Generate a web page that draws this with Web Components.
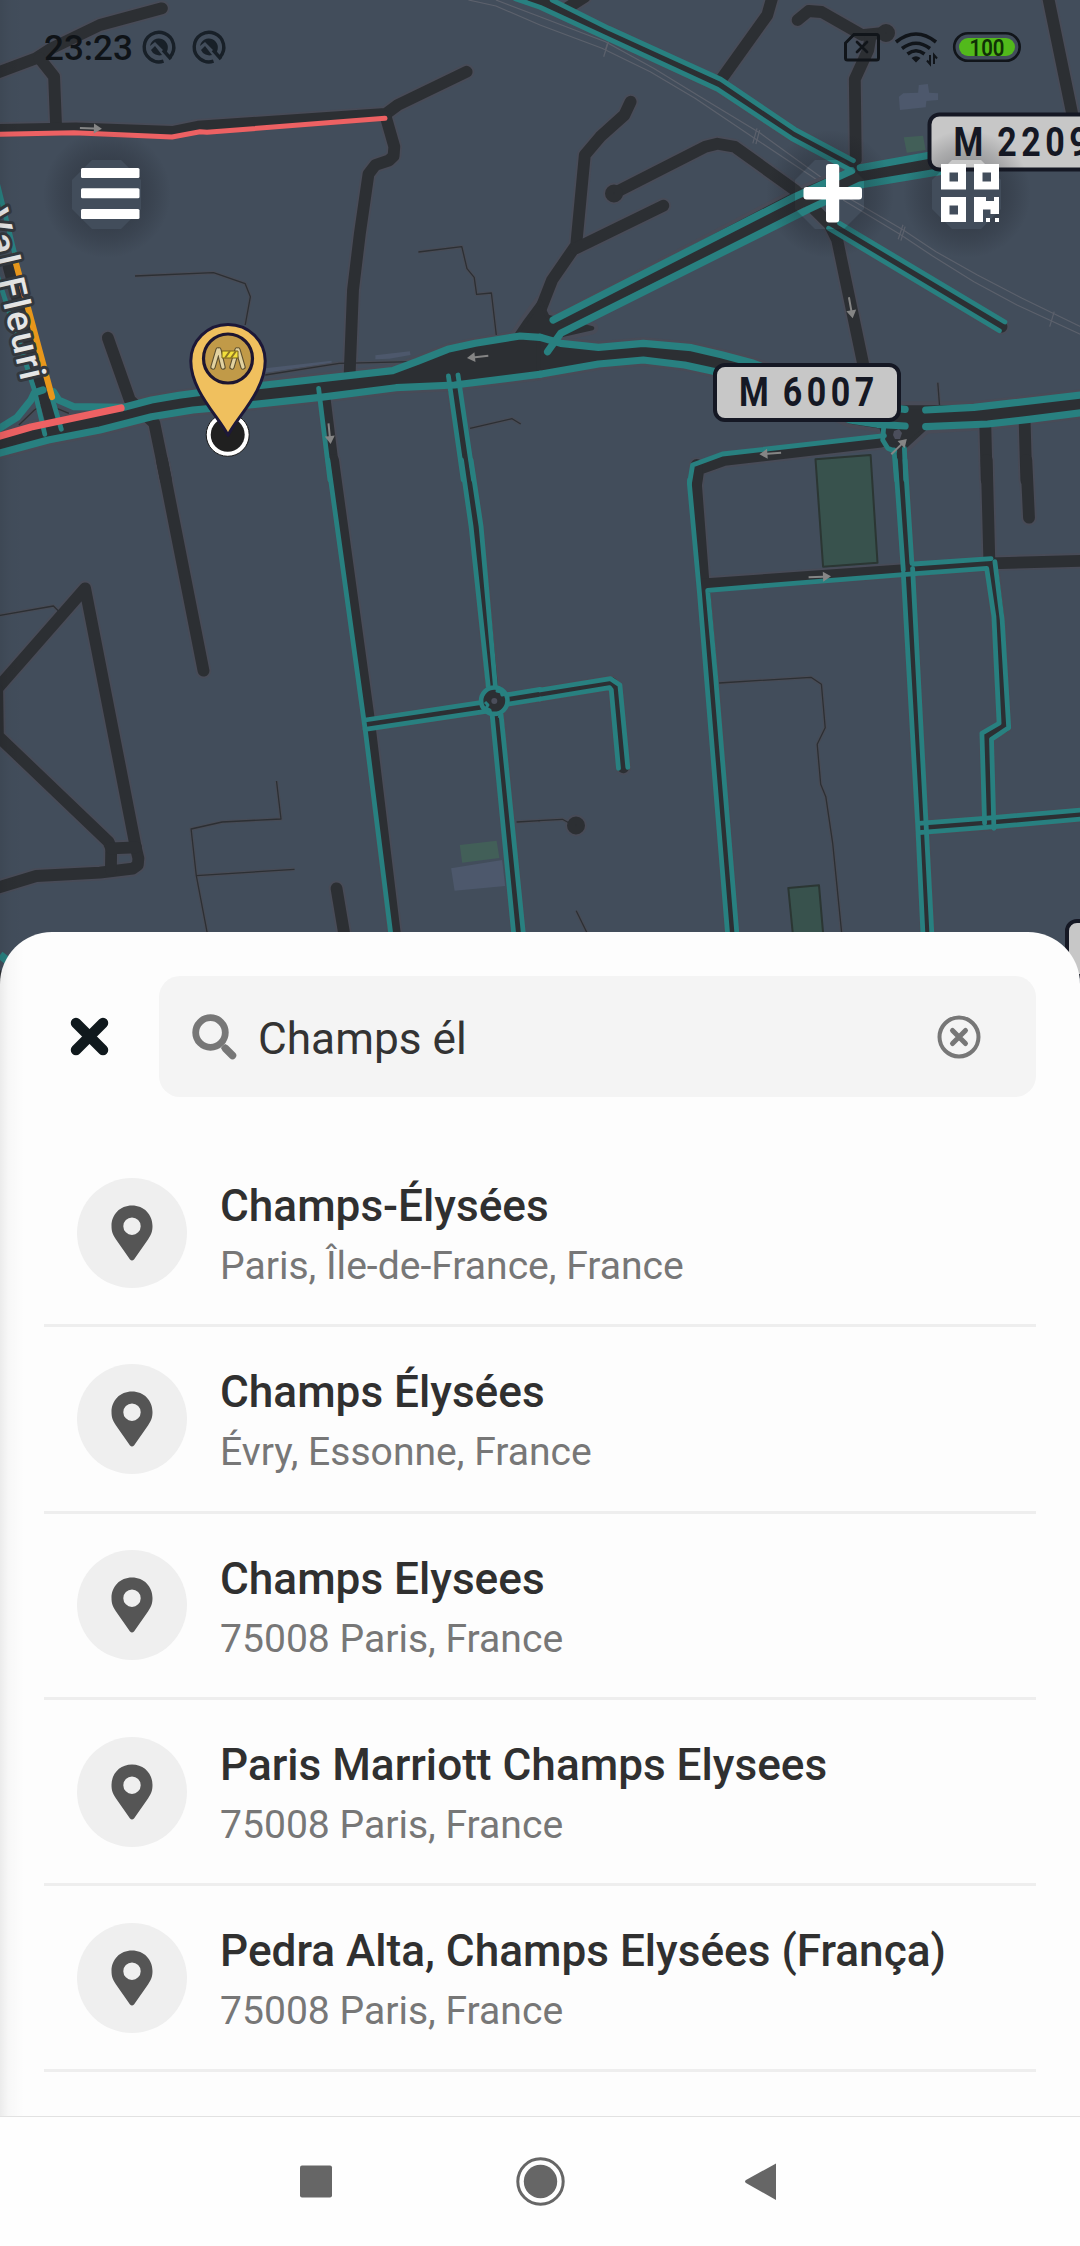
<!DOCTYPE html>
<html lang="fr">
<head>
<meta charset="utf-8">
<title>Recherche</title>
<style>
html,body{margin:0;padding:0}
body{font-family:Roboto,"Liberation Sans",sans-serif;background:#fdfdfd}
</style>
</head>
<body>
<nav-screen>
  <city-map slot="map"></city-map>
  <phone-status slot="status"></phone-status>
  <map-toolbar slot="tools"></map-toolbar>
  <search-sheet slot="sheet" query="Champs él">
    <place-row><span slot="name">Champs-Élysées</span><span slot="area">Paris, Île-de-France, France</span></place-row>
    <place-row><span slot="name">Champs Élysées</span><span slot="area">Évry, Essonne, France</span></place-row>
    <place-row><span slot="name">Champs Elysees</span><span slot="area">75008 Paris, France</span></place-row>
    <place-row><span slot="name">Paris Marriott Champs Elysees</span><span slot="area">75008 Paris, France</span></place-row>
    <place-row><span slot="name">Pedra Alta, Champs Elysées (França)</span><span slot="area">75008 Paris, France</span></place-row>
  </search-sheet>
  <system-nav slot="nav"></system-nav>
</nav-screen>
<script>
function define(name, render) {
  customElements.define(name, class extends HTMLElement {
    constructor() {
      super();
      this.attachShadow({ mode: 'open' });
    }
    connectedCallback() { this.shadowRoot.innerHTML = render(this); }
  });
}

const TILES = { A: [0, 0], B: [540, 0], C: [0, 460], D: [540, 460] };
function project(tile, pts) {
  const n = pts.trim().split(/[ ,]+/).map(Number), o = TILES[tile], out = [];
  for (let i = 0; i < n.length; i += 2)
    out.push((o[0] + n[i] / 2.9037).toFixed(1) + ',' + (o[1] + n[i + 1] / 3).toFixed(1));
  return out.join(' ');
}
const streets = [
  ['A','-10 219,105 175,150 145,290 75,470 25'],['A','115 175,157 230,163 380'],
  ['A','-10 390,220 385,500 396,575 380,1120 342,1155 315,1355 215'],
  ['A','1120 350,1145 440,1143 468,1130 481,1090 495,1070 522,1045 700,1025 870,1015 1125'],
  ['A','313 1013,377 1200,448 1270,482 1440'],['C','470 0,591 632'],
  ['A','943 1200,972 1440'],['C','967 0,1070 770,1147 1425'],
  ['A','1318 1160,1360 1440'],['C','1354 0,1383 200,1430 690'],
  ['A','25 800,155 1290'],
  ['B','-20 -5,520 255,735 402,905 495'],
  ['B','850 675,1340 980'],
  ['B','215 580,480 440,515 431,565 440,740 570,840 672,863 720,938 1090'],
  ['B','263 305,245 345,175 410,130 465,105 735,35 840,5 920,-30 990'],['B','105 745,358 617'],
  ['B','70 30,130 -10'],['B','675 -10,660 45,525 240'],
  ['B','748 60,780 33,818 36,935 105,1005 98'],['B','960 108,953 150,914 238,917 480'],
  ['B','1475 -10,1547 350'],
  ['B','990 1325,535 1380,460 1408,453 1455'],['D','455 15,453 75,477 400,498 650,558 1425'],
  ['B','1043 1340,1049 1440'],['D','1047 0,1068 320,1126 1425'],
  ['B','1293 1275,1297 1440'],['D','1297 0,1305 310'],['B','1407 1260,1412 1440'],['D','1412 0,1420 173'],
  ['D','475 373,1070 330,1310 310,1580 302'],
  ['D','1310 310,1330 470,1347 800,1297 828,1304 1090'],
  ['D','1110 1104,1310 1088,1580 1063'],
  ['C','1070 793,1400 742'],['C','1450 722,1568 704'],['D','0 704,207 669,219 681,242 922'],
  ['C','1441 740,1506 1425'],
  ['C','-12 690,247 385,395 1165,402 1195,400 1215,385 1226,290 1238,105 1248,-10 1284'],
  ['C','-8 690,-6 828,315 1145,323 1165,322 1230'],['C','323 1165,395 1162'],
  ['C','977 1285,1000 1425']
];
const wide = [['B','1160 490,900 533,750 600,48 980']];
const blocks = [
  ['A','0 1308,90 1280,350 1224,440 1200,620 1172,770 1155,1140 1112,1210 1085,1300 1048,1380 1030,1510 1008,1568 1008,1568 1123,1320 1155,1150 1163,930 1192,740 1213,560 1230,440 1250,290 1290,140 1320,0 1360'],
  ['A','1568 905,1525 965,1500 1003,1568 1020,1720 985,1590 950'],
  ['B','-4 1010,60 1030,170 1042,300 1030,440 1043,530 1065,620 1090,800 1160,950 1215,1060 1222,1115 1222,1260 1222,1380 1208,1580 1184,1580 1237,1420 1258,1300 1272,1120 1283,1060 1340,1010 1335,990 1280,900 1265,750 1200,530 1120,420 1095,300 1080,170 1092,-4 1123']
];
const paths = [
  ['A','392 828,620 818,712 851,727 890,712 975'],['A','1215 756,1341 740,1356 806,1377 832,1384 883,1427 879,1441 1005'],
  ['A','770 1125,985 1090,1200 1085'],['A','1365 1285,1487 1256,1512 1272'],
  ['A','55 1275,100 1230,130 1210,200 1240'],['B','1155 1148,1160 1215'],
  ['D','520 669,787 652,817 673,828 803,805 853,815 973,830 1010,850 1150,876 1420'],
  ['D','-5 1082,65 1078,90 1092'],['C','1500 1086,1568 1082'],['D','105 1352,137 1420'],
  ['C','0 466,155 438,170 453'],['C','803 963,816 1077,645 1086,555 1107,570 1247,602 1420'],['C','570 1247,855 1228']
];
const rails = [
  ['A','1360 0,1440 18,1568 75'],['A','1440 0,1568 50'],
  ['B','0 50,190 125,330 205,465 290,640 400,820 535'],['B','0 75,180 145,320 215,450 295,630 420,805 540'],
  ['B','890 590,1055 690,1150 755,1270 825,1400 895,1580 985'],['B','880 600,1045 703,1140 768,1260 845,1385 915,1580 1008'],
  ['B','185 170,200 120'],['B','190 150,196 130'],['B','618 430,630 385'],['B','627 432,638 390'],
  ['B','1040 718,1054 674'],['B','1048 722,1060 680'],['B','1480 980,1493 935']
];
const flow = [
  ['A','925 1165,958 1440'],['C','952 0,1062 820,1135 1425'],
  ['A','1302 1128,1345 1440'],['A','1330 1125,1375 1440'],
  ['C','1340 0,1368 200,1418 680'],['C','1368 0,1397 200,1440 695'],
  ['B','35 0,200 85,525 238,740 388,910 482'],['B','-72 -4,0 22,515 268,730 415,905 512'],
  ['B','870 670,1350 966'],['B','838 685,1334 992'],
  ['B','1000 1307,530 1362,443 1395,434 1450'],['D','434 60,434 75,463 400,545 1425'],
  ['D','572 1425,510 650,487 391,1100 340,1297 325,1318 470,1333 790,1283 820,1291 1090'],
  ['D','1085 312,1310 296'],['D','1321 305,1342 480,1361 803,1311 838,1318 1105'],
  ['D','1055 340,1097 1100,1112 1425'],['D','1082 325,1138 1425'],
  ['B','1028 1350,1035 1440'],['B','1058 1345,1062 1440'],['D','1032 0,1055 330'],['D','1060 0,1080 310'],
  ['D','1100 1090,1290 1075,1580 1049'],['D','1100 1118,1320 1100,1580 1076'],
  ['C','1060 780,1400 727'],['C','1060 808,1425 752'],['C','1462 706,1568 688'],['C','1472 733,1568 717'],
  ['D','0 690,205 656,232 675,255 922'],['D','0 717,202 683,207 690,228 925'],
  ['C','1428 752,1492 1425'],['C','1455 765,1520 1425'],
  ['B','998 1280,995 1320,1010 1345,1030 1354'],['A','-10 540,45 770'],['A','-10 820,100 1170,130 1303'],['A','150 1190,178 1288']
];
const flowWide = [
  ['A','-10 1290,50 1252,90 1200,100 1178,125 1170'],['A','155 1175,170 1200,215 1220,360 1222,440 1200,520 1186,620 1172,770 1155,1140 1112,1210 1085,1300 1048,1380 1030,1510 1008,1568 1012'],
  ['A','-10 1362,140 1320,290 1290,440 1250,560 1230,740 1213,930 1192,1150 1163,1320 1155,1568 1123'],
  ['B','0 1012,60 1030,170 1042,300 1030,440 1043,530 1065,620 1090,800 1160,950 1215,1060 1228'],
  ['B','0 1123,170 1092,300 1080,420 1095,530 1120,750 1200,900 1260,980 1273,1060 1278'],
  ['B','1120 1230,1260 1222,1380 1208,1580 1184'],['B','1120 1280,1300 1272,1420 1258,1580 1237'],
  ['B','38 960,740 590,905 512'],['B','22 1055,60 1000,780 628,930 555,1160 515'],['B','930 503,1130 466']
];
const arrows = [['A',232,384,296,386],['A',1418,1067,1356,1074],['A',954,1270,960,1332],['B',897,892,908,955],['B',700,1358,637,1363],['B',1020,1363,1065,1317],['D',780,352,845,349]];
const lines = l => l.map(([t, p]) => `<polyline points="${project(t, p)}"/>`).join('');
const areas = l => l.map(([t, p]) => `<polygon points="${project(t, p)}"/>`).join('');
const dots = [[614,193.5],[886,33],[576,825.5]].map(([x, y]) => `<circle cx="${x}" cy="${y}" r="4"/>`).join('');
const arrow = ([t, a, b, c, d]) => {
  const [p, q] = project(t, `${a} ${b} ${c} ${d}`).split(' ').map(s => s.split(',').map(Number));
  const deg = Math.atan2(q[1] - p[1], q[0] - p[0]) * 180 / Math.PI, len = Math.hypot(q[0] - p[0], q[1] - p[1]);
  return `<g transform="translate(${p[0]} ${p[1]}) rotate(${deg})"><path d="M0 -1H${len - 8}V-5L${len} 0L${len - 8} 5V1H0Z"/></g>`;
};
const shield = (x, y, label) => `<g><rect x="${x + 2}" y="${y + 2}" width="184" height="55" rx="10" fill="#c7c7c7" stroke="#151824" stroke-width="4"/>
  ${label && `<text transform="translate(${x + 26} ${y + 43}) scale(.85 1)" font-family="Roboto,sans-serif" font-weight="700" font-size="40" letter-spacing="5.3" word-spacing="-4" fill="#151824">${label}</text>`}</g>`;

define('city-map', () => `<style>:host{display:block;height:986px;background:#424d5b;overflow:hidden}svg{display:block}</style>
<svg width="1080" height="986" viewBox="0 0 1080 986" fill="none" stroke-linejoin="round">
<g fill="#4d586c">${areas([['A','770 1105,963 1082,963 1090,770 1118'],['A','1090 1066,1190 1054,1192 1065,1130 1076,1090 1078'],['B','1042 290,1055 280,1098 278,1100 255,1126 252,1130 278,1156 280,1156 300,1122 303,1120 322,1045 330'],['C','1310 1225,1458 1200,1467 1278,1320 1292']])}</g>
<g fill="#425f58">${areas([['B','1056 412,1112 407,1120 450,1065 458'],['C','1335 1155,1442 1142,1450 1194,1342 1208']])}</g>
<g fill="#38524d" stroke="#2b3633" stroke-width="2">${areas([['D','800 -2,960 -15,980 308,822 320'],['D','721 1284,810 1276,823 1430,735 1430']])}</g>
<g stroke="#5c616c" stroke-width="1.2">${lines(rails)}</g>
<g stroke="#484b55" stroke-width="3.4">${lines(paths)}</g>
<g stroke="#484b57" stroke-width="15.5" stroke-linecap="round">${lines(streets)}${dots.replace(/r="4"/g, 'r="3"')}</g>
<g stroke="#484b57" stroke-width="25">${lines(wide)}</g>
<g fill="#484b57" stroke="#484b57" stroke-width="12">${areas(blocks)}</g>
<g stroke="#2c2f33" stroke-width="1.3">${lines(paths)}</g>
<g stroke="#2c2f33" stroke-width="11.8" stroke-linecap="round">${lines(streets)}</g>
<g fill="#2c2f33" stroke="#2c2f33" stroke-width="10">${dots}</g>
<g stroke="#2c2f33" stroke-width="18">${lines(wide)}</g>
<g fill="#2c2f33" stroke="#2c2f33" stroke-width="4">${areas(blocks)}</g>
<g stroke="#288080" stroke-width="4.8" stroke-linecap="round">${lines(flow)}</g>
<g stroke="#288080" stroke-width="7.2" stroke-linecap="round">${lines(flowWide)}</g>
<circle cx="494.3" cy="700.7" r="13.2" fill="#2c2f33" stroke="#288080" stroke-width="4.6"/>
<path d="M499 686l-2 5 4 1 1 3 4-1M485 702l3 3-2 3 4 2 2 9M499 718l2-4" stroke="#288080" stroke-width="3"/>
<circle cx="494.3" cy="701" r="3" fill="#4b4e5b"/>
<path d="M894 431l5-2 3 4-2 6h-5l-2-4z" fill="#4b4e5b"/>
<g stroke-linecap="round"><path d="M-4 134.4L74 132.7 172 137 200 131.8 207 132.3 385 118.3" stroke="#ed6163" stroke-width="5"/>
<path d="M-5 437.5L31 427 121 408" stroke="#ed6163" stroke-width="7.2"/><path d="M14 256L52 397" stroke="#e8971b" stroke-width="6.2"/></g>
<path d="M0 955l9 7" stroke="#288080" stroke-width="8"/><path d="M0 970l12 10v8H0z" fill="#2c2f33"/>
<g fill="#858585">${arrows.map(arrow).join('')}</g>
<text transform="translate(-18 212) rotate(77)" font-family="Roboto,sans-serif" font-size="37" font-weight="500" textLength="174" fill="#e6e6e6" stroke="#33383e" stroke-width="6" paint-order="stroke">Val Fleuri</text>
${shield(713, 363, 'M 6007')}${shield(927.5, 112.5, 'M 2209')}${shield(1065, 919, '')}
<circle cx="227.7" cy="434.8" r="21.5" fill="#fff" stroke="#181818" stroke-width="1"/><circle cx="227.7" cy="434.8" r="17" fill="#202020"/>
<path d="M228 435.3C219 417 190.800 391 190.800 361A37 36.300 0 0 1 265.200 361C265.200 391 237 417 228 435.300Z" fill="#f0c05e" stroke="#1d1838" stroke-width="3"/>
<circle cx="228" cy="358.500" r="24.500" fill="#c19a48" stroke="#1d1530" stroke-width="3.200"/>
<g stroke="#5d5030" stroke-width="5.400" stroke-linecap="round"><path d="M218 350l-5 17M219 350l4 17M237 350l-5 17M238 350l5 17"/></g>
<g stroke="#e2d2a0" stroke-width="3.200" stroke-linecap="round"><path d="M218 350l-5 17M219 350l4 17M237 350l-5 17M238 350l5 17"/></g>
<path d="M222 351h16v7h-16z" fill="#f2df3c" stroke="#75611c"/><path d="M225 358l5-7M231 358l5-7" stroke="#8e7624" stroke-width="2"/>
</svg>`);

define('phone-status', () => `<style>:host{display:flex;justify-content:space-between;align-items:center;height:94px;padding:0 59px 0 45px}div{display:flex;align-items:center}svg{display:block}</style>
<div><svg width="190" height="50" viewBox="0 22 190 50" fill="none"><text x="-1" y="60" font-family="Roboto,sans-serif" font-weight="500" font-size="34.500" textLength="89" lengthAdjust="spacingAndGlyphs" fill="#0f1317">23:23</text>
${[114, 164].map(x => `<g transform="translate(${x} 47)"><path d="M11 10A14.800 14.800 0 1 0 4.500 14.200" stroke="#182028" stroke-width="3.400"/><path d="M-9 -1A9 9 0 1 1 7 6L-4 -5ZM-8 3L-4 -1 3 8A9 9 0 0 1-8 3Z" fill="#182028"/><path d="M4 3l8 9" stroke="#182028" stroke-width="3.400"/></g>`).join('')}</svg></div>
<div><svg width="180" height="50" viewBox="841 22 180 50" fill="none" stroke="#11151a">
<path d="M854 34.500H876.500Q878.500 34.500 878.500 36.500V58Q878.500 60 876.500 60H847.500Q845.500 60 845.500 58V43Z" stroke-width="3"/><path d="M857 42l10 10M867 42l-10 10" stroke-width="2.700" stroke-linecap="round"/>
<path d="M896 42Q916 26 936 42M902 48.500Q916 38 930 48.500M907.500 54Q916 47.500 924.500 54" stroke-width="3.600"/><path d="M911.500 58Q916 54.500 920.500 58L916 62.500Z" fill="#11151a" stroke="none"/><path d="M930 55v9l-3-3.500M934 64v-9l3 3.500" stroke-width="2"/>
<rect x="954.200" y="33.200" width="65.500" height="27.600" rx="13.800" stroke-width="2.600"/><rect x="959" y="38" width="56" height="18" rx="9" fill="#52b91b" stroke="none"/>
<text x="969.500" y="56" font-family="Roboto,sans-serif" font-weight="600" font-size="24.500" textLength="35" lengthAdjust="spacingAndGlyphs" fill="#103006" stroke="none">100</text></svg></div>`);

/* Toolbar glyphs sit on a soft round shadow with an octagonal opening. */
define('round-action', el => {
  const glyph = {
    menu: '<g fill="#fff"><rect x="38" y="38" width="58.500" height="10" rx="1.500"/><rect x="38" y="58.300" width="58.500" height="10" rx="1.500"/><rect x="38" y="79" width="58.500" height="10" rx="1.500"/></g>',
    plus: '<g fill="#fff"><rect x="37.500" y="57" width="58.500" height="12.500" rx="3"/><rect x="60" y="34" width="13.200" height="58.500" rx="3"/></g>',
    code: '<path fill="#fff" fill-rule="evenodd" d="M38 34h25v25.500H38zM46.500 42.500v9h8.500v-9zM71 34h25v25.500H71zM79.500 42.500v9H88v-9zM38 67h25v25H38zM46.500 75.500v9H55v-9zM71 67h12v4h8v-4h5v17H87.500v-4.500H80V92H71zM83 88h4v4h-4zM87.700 88v0zM92 88h4v4h-4z"/>'
  }[el.getAttribute('kind')];
  return `<style>:host{display:block;width:132px;height:132px}svg{display:block}</style><svg width="132" height="132" viewBox="0 0 132 132"><defs><radialGradient id="s" gradientUnits="userSpaceOnUse" cx="64" cy="64" r="64"><stop offset=".5" stop-color="#14161d" stop-opacity=".26"/><stop offset=".72" stop-color="#14161d" stop-opacity=".16"/><stop offset="1" stop-color="#14161d" stop-opacity="0"/></radialGradient></defs><path fill="url(#s)" fill-rule="evenodd" d="M0 0h132v130H0zM49 30L29 50V79L49 99H78L98 79V50L78 30z"/>${glyph}</svg>`;
});
define('map-toolbar', () => `<style>:host{display:flex;height:132px;padding:0 45px 0 43px}.gap{flex:1}round-action+round-action{margin-left:5px}</style><round-action kind="menu"></round-action><span class="gap"></span><round-action kind="plus"></round-action><round-action kind="code"></round-action>`);

define('place-row', () => `<style>:host{display:flex;align-items:center;height:183.300px;border-bottom:3px solid #eee;padding-left:33px}
.pin{width:110px;height:110px;border-radius:50%;background:#efefef;display:flex;align-items:center;justify-content:center;margin-right:33px}
.copy{display:flex;flex-direction:column;white-space:nowrap;padding-top:5px}.name{font-size:44.150px;font-weight:500;line-height:62px;color:#303030}.area{font-size:39.100px;line-height:58px;color:#777}</style>
<div class="pin"><svg width="42" height="56" viewBox="0 0 42 56"><path fill="#555" fill-rule="evenodd" d="M21 .500C9 .500.500 9.500.500 21C.500 27 2 30 5 34.500L19 54.500Q21 56.500 23 54.500L37 34.500C40 30 41.500 27 41.500 21C41.500 9.500 33 .500 21 .500ZM21 12.500a8.700 8.700 0 1 1 0 17.400a8.700 8.700 0 0 1 0-17.400Z"/></svg></div>
<div class="copy"><span class="name"><slot name="name"></slot></span><span class="area"><slot name="area"></slot></span></div>`);

define('search-sheet', el => `<style>:host{display:block;box-sizing:border-box;height:1184px;padding:44px 44px 0;background:#fdfdfd;border-radius:52px 52px 0 0}
header{display:flex;align-items:center;height:121px}.close{margin-left:26px;margin-right:50px}svg{display:block}
.field{flex:1;box-sizing:border-box;height:121px;border-radius:21px;background:#f4f4f4;display:flex;align-items:center;padding:0 55px 0 33px}
.q{flex:1;font-size:44.200px;line-height:60px;color:#333;padding:4px 0 0 21px}.list{display:flex;flex-direction:column;padding-top:44px}</style>
<header><svg class="close" width="39" height="39" viewBox="0 0 39 39"><path d="M6 6L33 33M33 6L6 33" stroke="#10191d" stroke-width="10.500" stroke-linecap="round"/></svg>
<div class="field"><svg width="45" height="46" viewBox="0 0 45 46" fill="none" stroke="#777"><circle cx="18.500" cy="18.500" r="14.800" stroke-width="6.800"/><path d="M31 32L34 35" stroke-width="6"/><path d="M33.500 34.500L40.500 41.500" stroke-width="7.500" stroke-linecap="round"/></svg>
<span class="q">${el.getAttribute('query')}</span>
<svg width="44" height="44" viewBox="0 0 44 44" fill="none" stroke="#777"><circle cx="22" cy="22" r="19.500" stroke-width="4"/><path d="M15.500 15.500L28.500 28.500M28.500 15.500L15.500 28.500" stroke-width="5" stroke-linecap="round"/></svg></div></header>
<div class="list"><slot></slot></div>`);

define('system-nav', () => `<style>:host{display:flex;box-sizing:border-box;height:130px;border-top:1px solid #e2e2e2;background:#fefefe;align-items:center;justify-content:center}svg{display:block}</style>
<svg width="480" height="50" viewBox="300 2156.500 480 50" fill="#666"><rect x="300" y="2165" width="32" height="32" rx="2"/><circle cx="540.500" cy="2181" r="22.700" fill="none" stroke="#666" stroke-width="3"/><circle cx="540.500" cy="2181" r="16.700"/><path d="M776 2163V2199.500L746 2182.500Q744 2181 746 2179.500Z"/></svg>`);

define('nav-screen', () => `<style>:host{display:block;position:relative;width:1080px;height:2246px;overflow:hidden}
.map{height:932px}.over{position:absolute;inset:0 0 auto 0}.sheet{position:relative}.edge{position:absolute;left:0;top:0;width:24px;height:2116px;background:linear-gradient(90deg,rgba(0,0,0,.07),rgba(0,0,0,.025) 35%,rgba(0,0,0,0));pointer-events:none}.tools{margin-top:36px}</style>
<div class="map"><slot name="map"></slot></div><div class="over"><slot name="status"></slot><div class="tools"><slot name="tools"></slot></div></div>
<div class="sheet"><slot name="sheet"></slot></div><slot name="nav"></slot><div class="edge"></div>`);
</script>
</body>
</html>
